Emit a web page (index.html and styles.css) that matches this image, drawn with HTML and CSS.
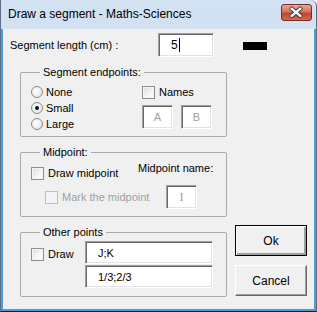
FILE: index.html
```html
<!DOCTYPE html>
<html>
<head>
    <link rel="stylesheet" href="styles.css">
    <title>Draw a segment</title>
</head>
<body>

    <div class="window">
      <div class="titlebar">
        <span class="title">Draw a segment - Maths-Sciences</span>
        <span class="close">
          <svg width="31" height="17" viewBox="0 0 31 17">
            <path d="M11 4.5 L20 12 M20 4.5 L11 12" stroke="#3a3a3a" stroke-width="4.5" stroke-linecap="round" fill="none"/>
            <path d="M11 4.5 L20 12 M20 4.5 L11 12" stroke="#ffffff" stroke-width="2.6" stroke-linecap="round" fill="none"/>
          </svg>
        </span>
      </div>

      <div class="client">
        <div class="length-row">
          <span class="length-label">Segment length (cm) :</span>
          <span class="textbox length-box">5<span class="caret"></span></span>
          <span class="swatch"></span>
        </div>

        <div class="body">
          <div class="groups">

            <fieldset class="group endpoints">
              <legend>Segment endpoints:</legend>
              <div class="radios">
                <label class="option"><span class="radio"></span>None</label>
                <label class="option"><span class="radio checked"></span>Small</label>
                <label class="option"><span class="radio"></span>Large</label>
              </div>
              <div class="names">
                <label class="option"><span class="check"></span>Names</label>
                <div class="name-boxes">
                  <span class="textbox small disabled">A</span>
                  <span class="textbox small disabled">B</span>
                </div>
              </div>
            </fieldset>

            <fieldset class="group midpoint">
              <legend>Midpoint:</legend>
              <div class="mid-left">
                <label class="option"><span class="check"></span>Draw midpoint</label>
                <label class="option indent disabled"><span class="check disabled"></span>Mark the midpoint</label>
              </div>
              <div class="mid-right">
                <span class="mid-label">Midpoint name:</span>
                <span class="textbox small disabled serif">I</span>
              </div>
            </fieldset>

            <fieldset class="group others">
              <legend>Other points</legend>
              <label class="option draw"><span class="check"></span>Draw</label>
              <div class="other-boxes">
                <span class="textbox wide">J;K</span>
                <span class="textbox wide">1/3;2/3</span>
              </div>
            </fieldset>

          </div>

          <div class="buttons">
            <button class="btn default">Ok</button>
            <button class="btn">Cancel</button>
          </div>
        </div>
      </div>
    </div>

</body>
</html>
```

FILE: styles.css
```css
/* general styling */
* {
  box-sizing: border-box;
  margin: 0;
  padding: 0;
}

html, body {
  height: 100%;
  background: #ffffff;
}

body {
  font-family: "Liberation Sans", Arial, sans-serif;
  font-size: 11px;
  color: #000;
}

/* window frame */
.window {
  width: 317px;
  height: 312px;
  display: flex;
  flex-direction: column;
  background: linear-gradient(180deg, #d3e2f2 0%, #c4d7ee 100%);
  border-left: 1px solid #5b6d82;
  border-right: 1px solid #5b6d82;
  border-bottom: 1px solid #1c1c1c;
  border-top-right-radius: 6px;
}

.titlebar {
  height: 29px;
  display: flex;
  align-items: center;
  justify-content: space-between;
  padding: 0 4px 2px 7px;
}

.title {
  font-size: 12px;
  color: #000;
}

.close {
  width: 31px;
  height: 17px;
  margin-top: -2px;
  border: 1px solid #7a2a20;
  border-radius: 3px;
  background: linear-gradient(180deg, #e9a99b 0%, #d8705d 45%, #c3442f 55%, #cf6a52 100%);
  display: flex;
}

.close svg {
  margin: -1px 0 0 -1px;
}

.client {
  flex: 1;
  background: #f0f0f0;
  border-left: 2px solid #4f9bd6;
  border-right: 2px solid #4f9bd6;
  border-bottom: 2px solid #4f9bd6;
  padding: 4px 0 0 7px;
}

/* first row */
.length-row {
  display: flex;
  align-items: center;
  height: 24px;
}

.length-label {
  width: 148px;
}

.textbox {
  display: inline-flex;
  align-items: center;
  background: #fff;
  border-top: 1px solid #a0a0a0;
  border-left: 1px solid #a0a0a0;
  border-right: 1px solid #ffffff;
  border-bottom: 1px solid #ffffff;
  box-shadow: inset 1px 1px 0 #696969, inset -1px -1px 0 #e3e3e3;
  font-size: 11px;
}

.length-box {
  width: 56px;
  height: 24px;
  padding-left: 12px;
  font-size: 12px;
}

.caret {
  display: inline-block;
  width: 1px;
  height: 14px;
  background: #000;
  margin-left: 1px;
}

.swatch {
  width: 24px;
  height: 8px;
  background: #000;
  margin-left: 29px;
  margin-top: 1px;
}

/* groups */
.body {
  display: flex;
  align-items: flex-end;
  margin-left: 10px;
}

.groups {
  width: 207px;
}

.group {
  border: 1px solid #a9a9a9;
  border-radius: 2px;
  padding: 0;
  margin-top: 8px;
  display: flex;
}

.group legend {
  margin-left: 9px;
  padding: 0 3px;
  line-height: 15px;
  font-size: 11px;
}

.option {
  display: flex;
  align-items: center;
  height: 16px;
  white-space: nowrap;
}

.option.disabled {
  color: #a0a0a0;
}

.radio {
  width: 12px;
  height: 12px;
  border-radius: 50%;
  border: 1px solid #8a8a8a;
  background: radial-gradient(circle at 40% 40%, #ffffff 0%, #e4e4e4 80%);
  margin-right: 3px;
  display: flex;
  align-items: center;
  justify-content: center;
}

.radio.checked::after {
  content: "";
  width: 4px;
  height: 4px;
  border-radius: 50%;
  background: #111;
}

.check {
  flex: none;
  width: 13px;
  height: 13px;
  border: 1px solid #8e8f8f;
  background: linear-gradient(135deg, #dcdcdc 0%, #f6f6f6 60%, #ffffff 100%);
  box-shadow: inset 0 0 0 1px #f4f4f4;
  margin-right: 4px;
}

.check.disabled {
  border-color: #c0c0c0;
  background: #f4f4f4;
}

.endpoints {
  padding: 4px 0 4px 10px;
  height: 72px;
}

.radios {
  width: 111px;
}

.name-boxes {
  display: flex;
  gap: 8px;
  margin-top: 5px;
}

.textbox.small {
  width: 31px;
  height: 24px;
  justify-content: center;
}

.textbox.disabled {
  color: #a0a0a0;
}

.textbox.serif {
  font-family: "Liberation Serif", serif;
  font-size: 12px;
}

.midpoint {
  padding: 0 0 7px 10px;
}

.mid-left {
  flex: none;
  width: 107px;
  padding-top: 5px;
}

.mid-left .indent {
  margin-top: 8px;
  margin-left: 14px;
}

.mid-right {
  display: flex;
  flex-direction: column;
  align-items: flex-start;
}

.mid-label {
  line-height: 16px;
}

.mid-right .textbox {
  margin-top: 9px;
  margin-left: 28px;
}

.others {
  padding: 1px 0 8px 10px;
}

.others .draw {
  width: 54px;
  margin-top: 5px;
}

.other-boxes {
  display: flex;
  flex-direction: column;
  gap: 1px;
}

.textbox.wide {
  width: 128px;
  height: 23px;
  padding-left: 12px;
}

/* buttons */
.buttons {
  display: flex;
  flex-direction: column;
  gap: 9px;
  margin-left: 8px;
  margin-bottom: 1px;
}

.btn {
  width: 72px;
  height: 31px;
  font-family: "Liberation Sans", Arial, sans-serif;
  font-size: 12px;
  color: #000;
  background: #f0f0f0;
  border-top: 1px solid #ffffff;
  border-left: 1px solid #ffffff;
  border-right: 1px solid #696969;
  border-bottom: 1px solid #696969;
  box-shadow: inset -1px -1px 0 #a0a0a0;
}

.btn.default {
  border: 1px solid #000;
  box-shadow: inset 1px 1px 0 #ffffff, inset -2px -2px 0 #a0a0a0;
}
```
